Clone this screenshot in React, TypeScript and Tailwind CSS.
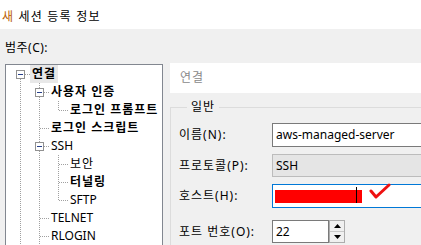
import React from 'react';

type Cell = { v?: 'full' | 'top' | 'bottom'; h?: boolean; box?: boolean };

type Row = { label: string; cells: Cell[]; bold?: boolean; selected?: boolean };

const rows: Row[] = [
  { label: '연결', bold: true, selected: true, cells: [{ v: 'bottom', h: true, box: true }] },
  { label: '사용자 인증', bold: true, cells: [{ v: 'full' }, { v: 'full', h: true, box: true }] },
  { label: '로그인 프롬프트', bold: true, cells: [{ v: 'full' }, { v: 'full' }, { v: 'top', h: true }] },
  { label: '로그인 스크립트', bold: true, cells: [{ v: 'full' }, { v: 'full', h: true }] },
  { label: 'SSH', cells: [{ v: 'full' }, { v: 'full', h: true, box: true }] },
  { label: '보안', cells: [{ v: 'full' }, { v: 'full' }, { v: 'full', h: true }] },
  { label: '터널링', bold: true, cells: [{ v: 'full' }, { v: 'full' }, { v: 'full', h: true }] },
  { label: 'SFTP', cells: [{ v: 'full' }, { v: 'full' }, { v: 'top', h: true }] },
  { label: 'TELNET', cells: [{ v: 'full' }, { v: 'full', h: true }] },
  { label: 'RLOGIN', cells: [{ v: 'full' }, { v: 'full', h: true }] },
  { label: '', cells: [{ v: 'full' }, { v: 'full' }] },
];

const hangul = /[가-힣]/;

const TreeCell = ({ v, h, box }: Cell) => (
  <svg width="19" height="18" viewBox="0 0 19 18" className="shrink-0 block">
    {v === 'full' && <line x1="9.5" y1="0" x2="9.5" y2="18" stroke="#a0a0a0" strokeDasharray="1 1" />}
    {v === 'top' && <line x1="9.5" y1="0" x2="9.5" y2="10" stroke="#a0a0a0" strokeDasharray="1 1" />}
    {v === 'bottom' && <line x1="9.5" y1="10" x2="9.5" y2="18" stroke="#a0a0a0" strokeDasharray="1 1" />}
    {h && <line x1="10" y1="9.5" x2="19" y2="9.5" stroke="#a0a0a0" strokeDasharray="1 1" />}
    {box && (
      <>
        <rect x="5.5" y="5.5" width="8" height="8" fill="#ffffff" stroke="#919191" />
        <line x1="7" y1="9.5" x2="12" y2="9.5" stroke="#27408b" />
      </>
    )}
  </svg>
);

const Field = ({ label, children }: { label: string; children: React.ReactNode }) => (
  <div className="flex items-center">
    <span className="w-[93px] shrink-0 leading-[16px] tracking-[1px]">{label}</span>
    {children}
  </div>
);

export default function App() {
  return (
    <div
      className="w-[421px] h-[245px] overflow-hidden flex flex-col text-[12px] text-black"
      style={{ fontFamily: '"Noto Sans", "Noto Sans CJK KR", sans-serif' }}
    >
      <div className="h-[29px] shrink-0 bg-white pl-[2px] pt-[8px] leading-[18px] tracking-[1.2px]">
        <span className="text-[#b85c00]">새</span> 세션 등록 정보
      </div>

      <div className="flex-1 bg-[#f0f0f0] px-[5px] pt-[11px]">
        <div className="leading-[16px] tracking-[0.5px]">범주(C):</div>

        <div className="mt-[7px] flex gap-[7px]">
          <div className="mt-[1px] w-[158px] h-[200px] shrink-0 border border-[#828790] bg-white pl-[5px]">
            {rows.map((r, n) => (
              <div key={n} className="flex h-[18px] items-stretch">
                {r.cells.map((c, i) => (
                  <TreeCell key={i} {...c} />
                ))}
                {r.label && (
                  <span
                    className={`flex items-center px-[2px] whitespace-nowrap ${r.bold ? 'font-bold' : ''} ${
                      r.selected ? 'bg-[#e8e8e8]' : ''
                    } ${hangul.test(r.label) ? 'tracking-[1px]' : ''}`}
                  >
                    {r.label}
                  </span>
                )}
              </div>
            ))}
          </div>

          <div className="w-[290px] shrink-0">
            <div className="h-[30px] bg-white pl-[10px] flex items-center text-[#8a8a8a] tracking-[1px]">연결</div>

            <fieldset className="mt-[6px] border border-[#dcdcdc] pl-[8px] pb-[10px]">
              <legend className="ml-[8px] px-[4px] leading-[16px] tracking-[1px]">일반</legend>
              <div className="pt-[8px] flex flex-col">
                <Field label="이름(N):">
                  <div className="w-[170px] h-[24px] border border-[#7a7a7a] bg-white pl-[3px] flex items-center">
                    aws-managed-server
                  </div>
                </Field>
                <div className="mt-[7px]">
                  <Field label="프로토콜(P):">
                    <div className="w-[170px] h-[23px] border border-[#bcbcbc] bg-[#e5e5e5] pl-[3px] flex items-center">
                      SSH
                    </div>
                  </Field>
                </div>
                <div className="mt-[7px]">
                  <Field label="호스트(H):">
                    <div className="relative w-[170px] h-[24px] border border-[#0078d7] bg-white pl-[2px] flex items-center">
                      <div className="w-[87px] h-[13px] bg-[#ff0000]" />
                      <div className="absolute left-[83px] top-[2px] w-[1px] h-[16px] bg-black" />
                      <svg width="22" height="17" viewBox="0 0 22 17" className="ml-[7px] -mt-[10px]">
                        <polyline
                          points="2,8 7,14 20,2"
                          fill="none"
                          stroke="#ee1111"
                          strokeWidth="3"
                          strokeLinecap="round"
                          strokeLinejoin="round"
                        />
                      </svg>
                    </div>
                  </Field>
                </div>
                <div className="mt-[12px]">
                  <Field label="포트 번호(O):">
                    <div className="w-[57px] h-[23px] border border-[#7a7a7a] bg-white pl-[3px] flex items-center">22</div>
                    <div className="w-[16px] h-[23px] flex flex-col border border-[#adadad] bg-[#f0f0f0]">
                      <div className="flex-1 border-b border-[#c8c8c8] flex items-center justify-center">
                        <svg width="7" height="4" viewBox="0 0 7 4">
                          <polygon points="0,4 7,4 3.5,0" fill="#000" />
                        </svg>
                      </div>
                      <div className="flex-1 flex items-center justify-center">
                        <svg width="7" height="4" viewBox="0 0 7 4">
                          <polygon points="0,0 7,0 3.5,4" fill="#000" />
                        </svg>
                      </div>
                    </div>
                  </Field>
                </div>
              </div>
            </fieldset>
          </div>
        </div>
      </div>
    </div>
  );
}
